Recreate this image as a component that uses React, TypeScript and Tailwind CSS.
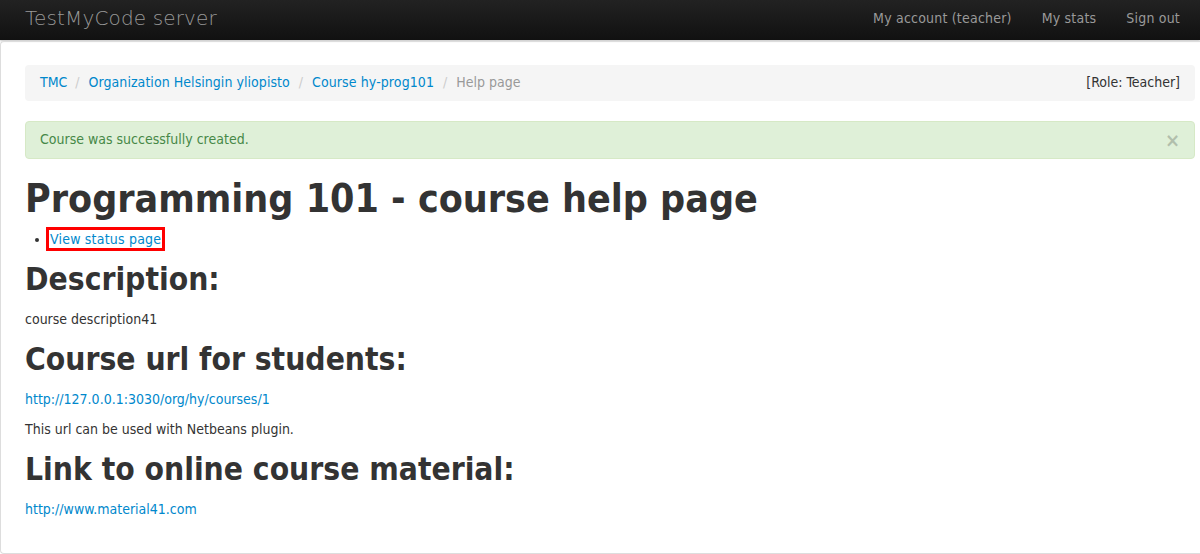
import React from "react";

export default function App() {
  return (
    <div className="min-h-[554px] bg-white overflow-hidden text-[14px] leading-[20px] text-[#333] [font-family:'DejaVu_Sans',sans-serif] [font-stretch:condensed]">
      <div className="h-[40px] bg-gradient-to-b from-[#222222] to-[#111111] flex items-center justify-between pl-[25px] pr-[5px] pb-[4px] shadow-[0_1px_2px_rgba(0,0,0,0.25)]">
        <div className="text-[20px] font-extralight text-[#999] leading-[20px] tracking-[0.15px]">TestMyCode server</div>
        <div className="flex text-[#999] tracking-[0.2px]">
          <span className="px-[15px]">My account (teacher)</span>
          <span className="px-[15px]">My stats</span>
          <span className="px-[15px]">Sign out</span>
        </div>
      </div>
      <div className="mt-[1px] border-l border-t border-b border-[#dddddd] rounded-tl-[4px] rounded-bl-[4px] pl-[24px] pr-[5px] pt-[23px] pb-[24px]">
        <div className="flex justify-between bg-[#f5f5f5] rounded-[4px] px-[15px] pt-[7px] pb-[9px] mb-[20px]">
          <div className="flex">
            <a className="text-[#0088cc]">TMC</a>
            <span className="pl-[8px] pr-[9px] text-[#ccc]">/</span>
            <a className="text-[#0088cc] tracking-[0.05px]">Organization Helsingin yliopisto</a>
            <span className="px-[9px] text-[#ccc]">/</span>
            <a className="text-[#0088cc] tracking-[0.1px]">Course hy-prog101</a>
            <span className="px-[9px] text-[#ccc]">/</span>
            <span className="text-[#999]">Help page</span>
          </div>
          <div>[Role: Teacher]</div>
        </div>
        <div className="flex justify-between items-center bg-[#dff0d8] border border-[#d6e9c6] rounded-[4px] pl-[14px] pr-[14px] pt-[7px] pb-[9px] mb-[20px] text-[#468847]">
          <span>Course was successfully created.</span>
          <span className="text-[20px] text-[#000] opacity-20 font-bold leading-[18px] translate-y-[1px]">×</span>
        </div>
        <h1 className="text-[39px] font-bold leading-[40px] my-[10px]">Programming 101 - course help page</h1>
        <ul className="list-disc ml-[25px] mb-[10px]">
          <li>
            <a className="text-[#0088cc] border-[3px] border-[#ff0000] px-[1px] py-[1px] -ml-[4px] tracking-[0.2px]">View status page</a>
          </li>
        </ul>
        <h2 className="text-[31.5px] font-bold leading-[40px] my-[10px]">Description:</h2>
        <p className="mb-[10px]">course description41</p>
        <h2 className="text-[31.5px] font-bold leading-[40px] my-[10px]">Course url for students:</h2>
        <p className="mb-[10px]"><a className="text-[#0088cc]">http://127.0.0.1:3030/org/hy/courses/1</a></p>
        <p className="mb-[10px]">This url can be used with Netbeans plugin.</p>
        <h2 className="text-[31.5px] font-bold leading-[40px] my-[10px]">Link to online course material:</h2>
        <p className="mb-[10px]"><a className="text-[#0088cc]">http://www.material41.com</a></p>
      </div>
    </div>
  );
}
